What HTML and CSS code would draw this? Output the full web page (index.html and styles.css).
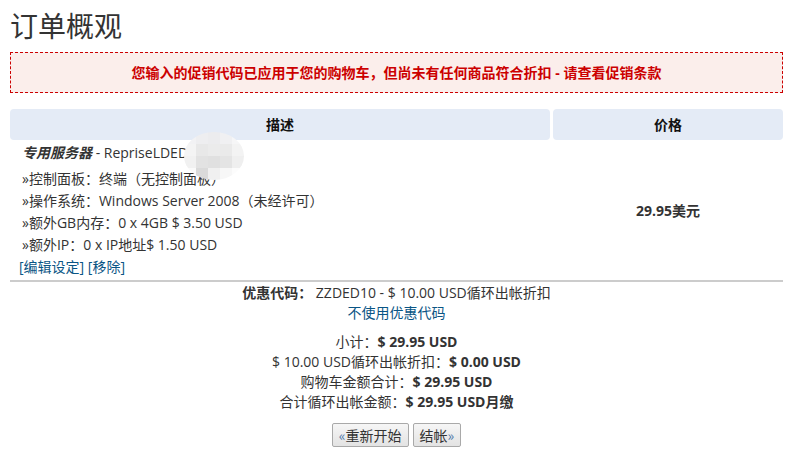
FILE: index.html
```html
<!DOCTYPE html>
<html lang="zh-CN">
<head>
  <meta charset="UTF-8">
  <link rel="stylesheet" href="styles.css">
  <title>订单概观</title>
</head>
<body>
  <main class="page">
    <h1 class="title">订单概观</h1>

    <div class="promo-error">您输入的促销代码已应用于您的购物车，但尚未有任何商品符合折扣 - 请查看促销条款</div>

    <section class="cart">
      <div class="cart-head">
        <div class="cart-th">描述</div>
        <div class="cart-th">价格</div>
      </div>
      <div class="cart-row">
        <div class="cart-desc">
          <div class="product-name"><em>专用服务器</em> - RepriseLDED</div>
          <div class="product-opts">
            <div>»控制面板：终端（无控制面板）</div>
            <div>»操作系统：Windows Server 2008（未经许可）</div>
            <div>»额外GB内存：0 x 4GB $ 3.50 USD</div>
            <div>»额外IP：0 x IP地址$ 1.50 USD</div>
          </div>
          <div class="product-links"><a href="#">[编辑设定]</a> <a href="#">[移除]</a></div>
          <div class="blur-mask">
            <span></span><span></span><span></span><span></span><span></span>
            <span></span><span></span><span></span><span></span><span></span>
            <span></span><span></span><span></span><span></span><span></span>
            <span></span><span></span><span></span><span></span><span></span>
          </div>
        </div>
        <div class="cart-price">29.95美元</div>
      </div>
    </section>

    <section class="summary">
      <div><strong>优惠代码：</strong> ZZDED10 - $ 10.00 USD循环出帐折扣</div>
      <div><a href="#">不使用优惠代码</a></div>
      <div class="totals">
        <div>小计：<strong>$ 29.95 USD</strong></div>
        <div>$ 10.00 USD循环出帐折扣：<strong>$ 0.00 USD</strong></div>
        <div>购物车金额合计：<strong>$ 29.95 USD</strong></div>
        <div>合计循环出帐金额：<strong>$ 29.95 USD月缴</strong></div>
      </div>
      <div class="actions">
        <button class="btn"><span class="arrow">«</span>重新开始</button>
        <button class="btn">结帐<span class="arrow">»</span></button>
      </div>
    </section>
  </main>
</body>
</html>
```

FILE: styles.css
```css
body {
  margin: 0;
  background: #fff;
  font-family: "Open Sans", "Noto Sans CJK SC", sans-serif;
  font-size: 14px;
  color: #333;
}

.page {
  width: 773px;
  padding: 0 10px;
}

.title {
  margin: 0;
  padding-top: 8px;
  height: 44px;
  font-size: 28px;
  font-weight: 400;
  line-height: 36px;
  color: #333;
}

.promo-error {
  height: 39px;
  line-height: 39px;
  border: 1px dashed #cc0000;
  background: #fbeeeb;
  color: #cc0000;
  font-weight: 700;
  text-align: center;
}

.cart {
  margin-top: 16px;
}

.cart-head {
  display: grid;
  grid-template-columns: 540px 230px;
  gap: 3px;
}

.cart-th {
  height: 31px;
  line-height: 31px;
  background: #e4ebf6;
  border-radius: 4px;
  font-weight: 700;
  color: #111;
  text-align: center;
}

.cart-row {
  display: grid;
  grid-template-columns: 540px 230px;
  gap: 3px;
  padding-top: 2px;
  padding-bottom: 2px;
  border-bottom: 2px solid #cccccc;
}

.cart-desc {
  position: relative;
  padding-left: 12px;
  line-height: 22px;
}

.product-name em {
  font-style: italic;
  font-weight: 700;
}

.product-opts {
  margin-top: 4px;
}

.product-links {
  margin-left: -3px;
}

a {
  color: #0a5585;
  text-decoration: none;
}

.cart-price {
  display: flex;
  align-items: center;
  justify-content: center;
  font-weight: 700;
}

.blur-mask {
  position: absolute;
  left: 174px;
  top: -10px;
  width: 60px;
  height: 48px;
  display: grid;
  grid-template-columns: repeat(5, 12px);
  grid-template-rows: repeat(4, 12px);
  border-radius: 50%;
  overflow: hidden;
}

.blur-mask span:nth-child(1) { background: #f2f2f4; }
.blur-mask span:nth-child(2) { background: #eeeef0; }
.blur-mask span:nth-child(3) { background: #ececee; }
.blur-mask span:nth-child(4) { background: #f0f0f2; }
.blur-mask span:nth-child(5) { background: #f6f6f7; }
.blur-mask span:nth-child(6) { background: #f4f4f4; }
.blur-mask span:nth-child(7) { background: #e8e8e8; }
.blur-mask span:nth-child(8) { background: #ebebeb; }
.blur-mask span:nth-child(9) { background: #eaeaea; }
.blur-mask span:nth-child(10) { background: #f3f3f3; }
.blur-mask span:nth-child(11) { background: #f1f1f1; }
.blur-mask span:nth-child(12) { background: #e2e2e2; }
.blur-mask span:nth-child(13) { background: #e0e0e0; }
.blur-mask span:nth-child(14) { background: #e4e4e4; }
.blur-mask span:nth-child(15) { background: #efefef; }
.blur-mask span:nth-child(16) { background: #fafafa; }
.blur-mask span:nth-child(17) { background: #dadada; }
.blur-mask span:nth-child(18) { background: #f0f0f0; }
.blur-mask span:nth-child(19) { background: #f7f7f7; }
.blur-mask span:nth-child(20) { background: #fcfcfc; }

.summary {
  padding-top: 1px;
  text-align: center;
  line-height: 20px;
}

.totals {
  margin-top: 9px;
}

.actions {
  margin-top: 11px;
  display: flex;
  justify-content: center;
  gap: 4px;
}

.btn {
  height: 24px;
  padding: 0 6px;
  border: 1px solid #a9a9a9;
  border-radius: 2px;
  background: linear-gradient(#f6f6f6, #e3e3e3);
  font-family: "Noto Sans CJK SC", "Open Sans", sans-serif;
  font-size: 14px;
  color: #333;
  line-height: 20px;
}

.arrow {
  color: #4a76a8;
}
```
